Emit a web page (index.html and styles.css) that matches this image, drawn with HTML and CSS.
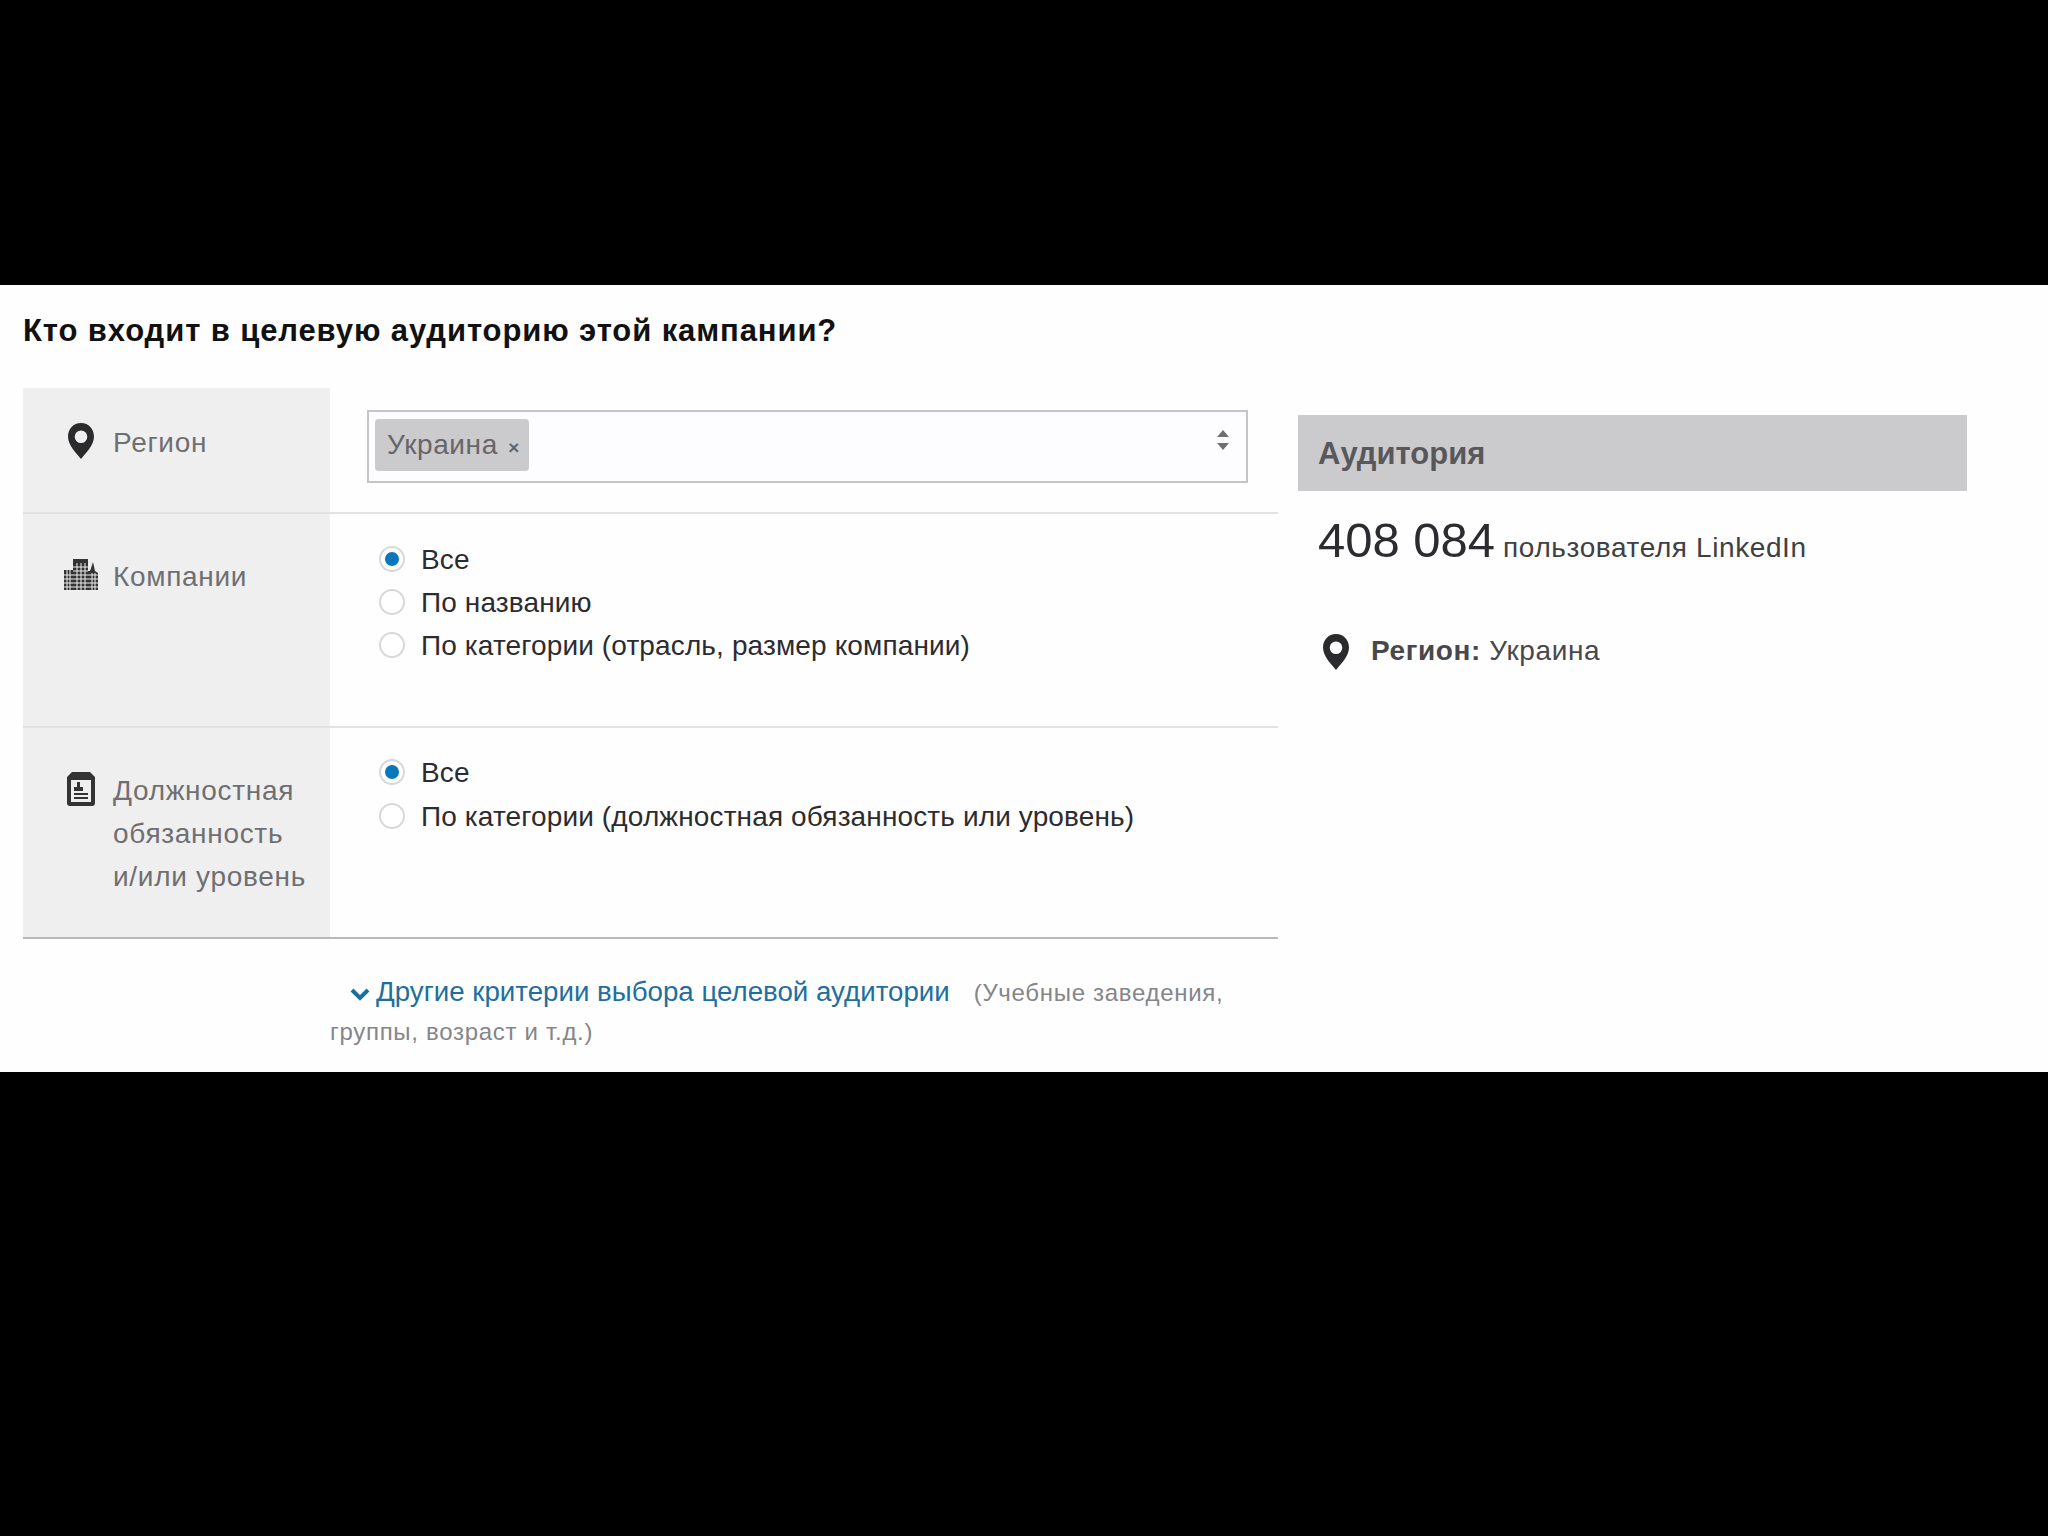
FILE: index.html
```html
<!DOCTYPE html>
<html lang="ru">
<head>
<meta charset="utf-8">
<title>Целевая аудитория</title>
<link rel="stylesheet" href="styles.css">
</head>
<body>
<svg class="defs" width="0" height="0" aria-hidden="true">
  <defs>
    <symbol id="pin" viewBox="0 0 28 36">
      <path fill-rule="evenodd" d="M14 0C6.300 0 1 6 1 13.600 1 22.500 9.500 30.500 14 36c4.500-5.500 13-13.500 13-22.400C27 6 21.700 0 14 0zm0 7.500a6.300 6.300 0 1 1 0 12.600 6.300 6.300 0 0 1 0-12.600z"/>
    </symbol>
  </defs>
</svg>
<main class="sheet">
  <section class="form-side">
    <h1 class="title">Кто входит в целевую аудиторию этой кампании?</h1>
    <div class="rows">
      <div class="row row-region">
        <div class="label">
          <svg class="icon icon-pin"><use href="#pin"/></svg>
          <span>Регион</span>
        </div>
        <div class="field field-region">
          <div class="select">
            <span class="tag">Украина <span class="tag-x">×</span></span>
            <span class="arrows"><i class="arrow-up"></i><i class="arrow-down"></i></span>
          </div>
        </div>
      </div>
      <div class="row row-company">
        <div class="label">
          <svg class="icon icon-building" viewBox="0 0 34 32">
            <path d="M0 12h9v20H0zM9 1h15v31H9zM24 13l2 0 3-9 2 9 3 2v17H24z" fill="#333"/>
            <path d="M0 17h34M0 21h34M0 25h34M0 29h34M13 5v27M17 5v27M21 5v27M9 9h15M9 13h15M3 12v20M6 12v20M28 15v17M31 15v17" stroke="#efeff0" stroke-width="1" fill="none"/>
          </svg>
          <span>Компании</span>
        </div>
        <div class="field options">
          <label class="option"><span class="radio is-on"></span>Все</label>
          <label class="option"><span class="radio"></span>По названию</label>
          <label class="option"><span class="radio"></span>По категории (отрасль, размер компании)</label>
        </div>
      </div>
      <div class="row row-title">
        <div class="label">
          <svg class="icon icon-card" viewBox="0 0 28 34">
            <path fill-rule="evenodd" d="M5 0h18l5 5v26a3 3 0 0 1-3 3H3a3 3 0 0 1-3-3V5zM4 8v22h20V8z" fill="#333"/>
            <path d="M10 10h3v5h3v4H7v-4h3zM7 21h14v2H7zM7 25h14v2H7z" fill="#333"/>
          </svg>
          <span class="label-text">Должностная обязанность <span class="nowrap">и/или</span> уровень</span>
        </div>
        <div class="field options">
          <label class="option"><span class="radio is-on"></span>Все</label>
          <label class="option"><span class="radio"></span>По категории (должностная обязанность или уровень)</label>
        </div>
      </div>
    </div>
    <p class="more">
      <svg class="chevron" viewBox="0 0 20 14"><path d="M2 3l8 8 8-8" fill="none" stroke="#1a6f9c" stroke-width="4"/></svg><a class="more-link" href="#">Другие критерии выбора целевой аудитории</a>
      <span class="more-note">(Учебные заведения, группы, возраст и т.д.)</span>
    </p>
  </section>
  <aside class="audience">
    <h2 class="audience-head">Аудитория</h2>
    <p class="count"><span class="count-num">408 084</span> <span class="count-unit">пользователя LinkedIn</span></p>
    <p class="crit">
      <svg class="icon icon-pin"><use href="#pin"/></svg>
      <span><b>Регион:</b> Украина</span>
    </p>
  </aside>
</main>
</body>
</html>
```
FILE: styles.css
```css
* { box-sizing: border-box; }
html, body { margin: 0; height: 100%; }
body {
  background: #000;
  padding-top: 285px;
  font-family: "Liberation Sans", Arial, sans-serif;
  font-size: 28px;
  letter-spacing: 0.2px;
  color: #333;
}
.defs { position: absolute; }
.sheet {
  background: #fefefe;
  height: 787px;
  padding: 0 0 0 23px;
  display: flex;
  align-items: flex-start;
}
.form-side { width: 1255px; flex: none; }
.title {
  margin: 0;
  height: 103px;
  padding-top: 28px;
  font-size: 31px;
  line-height: 36px;
  font-weight: 700;
  letter-spacing: 0.9px;
  color: #111;
}
.rows { display: flex; flex-direction: column; }
.row { display: flex; border-bottom: 2px solid #e2e2e4; }
.row-region { height: 126px; }
.row-company { height: 214px; }
.row-title { height: 211px; border-bottom-color: #b9b9bb; }
.label {
  width: 307px;
  flex: none;
  background: #efeff0;
  display: flex;
  align-items: flex-start;
  color: #6f6f72;
  letter-spacing: 0.7px;
  line-height: 43px;
  padding-left: 44px;
  gap: 14px;
}
.row-region .label { padding-top: 33px; }
.row-company .label { padding-top: 41px; }
.row-title .label { padding-top: 41px; padding-right: 8px; }
.icon { flex: none; fill: #2b2b2d; }
.icon-pin { width: 28px; height: 36px; margin: 2px 4px 0 0; }
.icon-building { width: 34px; height: 32px; margin: 3px 1px 0 -3px; }
.icon-card { width: 28px; height: 34px; margin: 3px 4px 0 0; }
.label-text { display: block; }
.nowrap { white-space: nowrap; }
.field { flex: 1; }
.field-region { padding: 22px 30px 0 37px; }
.select {
  height: 73px;
  border: 2px solid #c5c5c7;
  background: #fdfcfe;
  padding: 7px 7px 7px 6px;
  display: flex;
  justify-content: space-between;
}
.tag {
  background: #cbcacc;
  border-radius: 4px;
  height: 52px;
  line-height: 52px;
  padding: 0 9px 0 12px;
  color: #66666a;
  letter-spacing: 0.6px;
}
.tag-x { font-size: 19px; font-weight: 700; margin-left: 2px; }
.arrows {
  display: flex;
  flex-direction: column;
  gap: 6px;
  margin: 11px 10px 0 0;
}
.arrow-up, .arrow-down { display: block; width: 0; height: 0; border-left: 6px solid transparent; border-right: 6px solid transparent; }
.arrow-up { border-bottom: 7px solid #6f6f72; }
.arrow-down { border-top: 7px solid #6f6f72; }
.options {
  padding: 24px 0 0 49px;
  display: flex;
  flex-direction: column;
  letter-spacing: 0.13px;
}
.row-title .options { padding-top: 23.500px; }
.option {
  display: flex;
  align-items: center;
  height: 43.400px;
  gap: 16px;
  color: #2c2c30;
}
.radio {
  width: 26px;
  height: 26px;
  margin-top: -2px;
  border-radius: 50%;
  border: 2px solid #d8d8da;
  background: #fff;
  flex: none;
  display: flex;
  align-items: center;
  justify-content: center;
}
.radio.is-on::after {
  content: "";
  width: 14px;
  height: 14px;
  border-radius: 50%;
  background: #0a77bd;
}
.more {
  margin: 0 0 0 307px;
  width: 930px;
  padding-top: 34px;
  line-height: 38px;
  text-indent: 20px;
}
.chevron { width: 20px; height: 14px; margin-right: 6px; }
.more-link { color: #1f6f9e; text-decoration: none; font-size: 27.700px; letter-spacing: 0; }
.more-note { color: #85858a; font-size: 24px; margin-left: 16px; letter-spacing: 0.7px; }
.audience { width: 669px; margin-left: 20px; flex: none; padding-top: 130px; }
.audience-head {
  margin: 0;
  background: #cbcacc;
  height: 76px;
  line-height: 78px;
  padding-left: 20px;
  font-size: 31px;
  letter-spacing: 0;
  color: #58585c;
}
.count { margin: 21px 0 0 20px; line-height: 56px; color: #3f3f44; }
.count-num { font-size: 49px; letter-spacing: 0; color: #2c2c30; }
.count-unit { letter-spacing: 0.6px; }
.crit { margin: 57px 0 0 24px; display: flex; gap: 17px; line-height: 36px; color: #48484c; align-items: flex-start; letter-spacing: 0.6px; }
.crit .icon-pin { margin-top: 1px; }
.crit b { color: #48484c; }
```
